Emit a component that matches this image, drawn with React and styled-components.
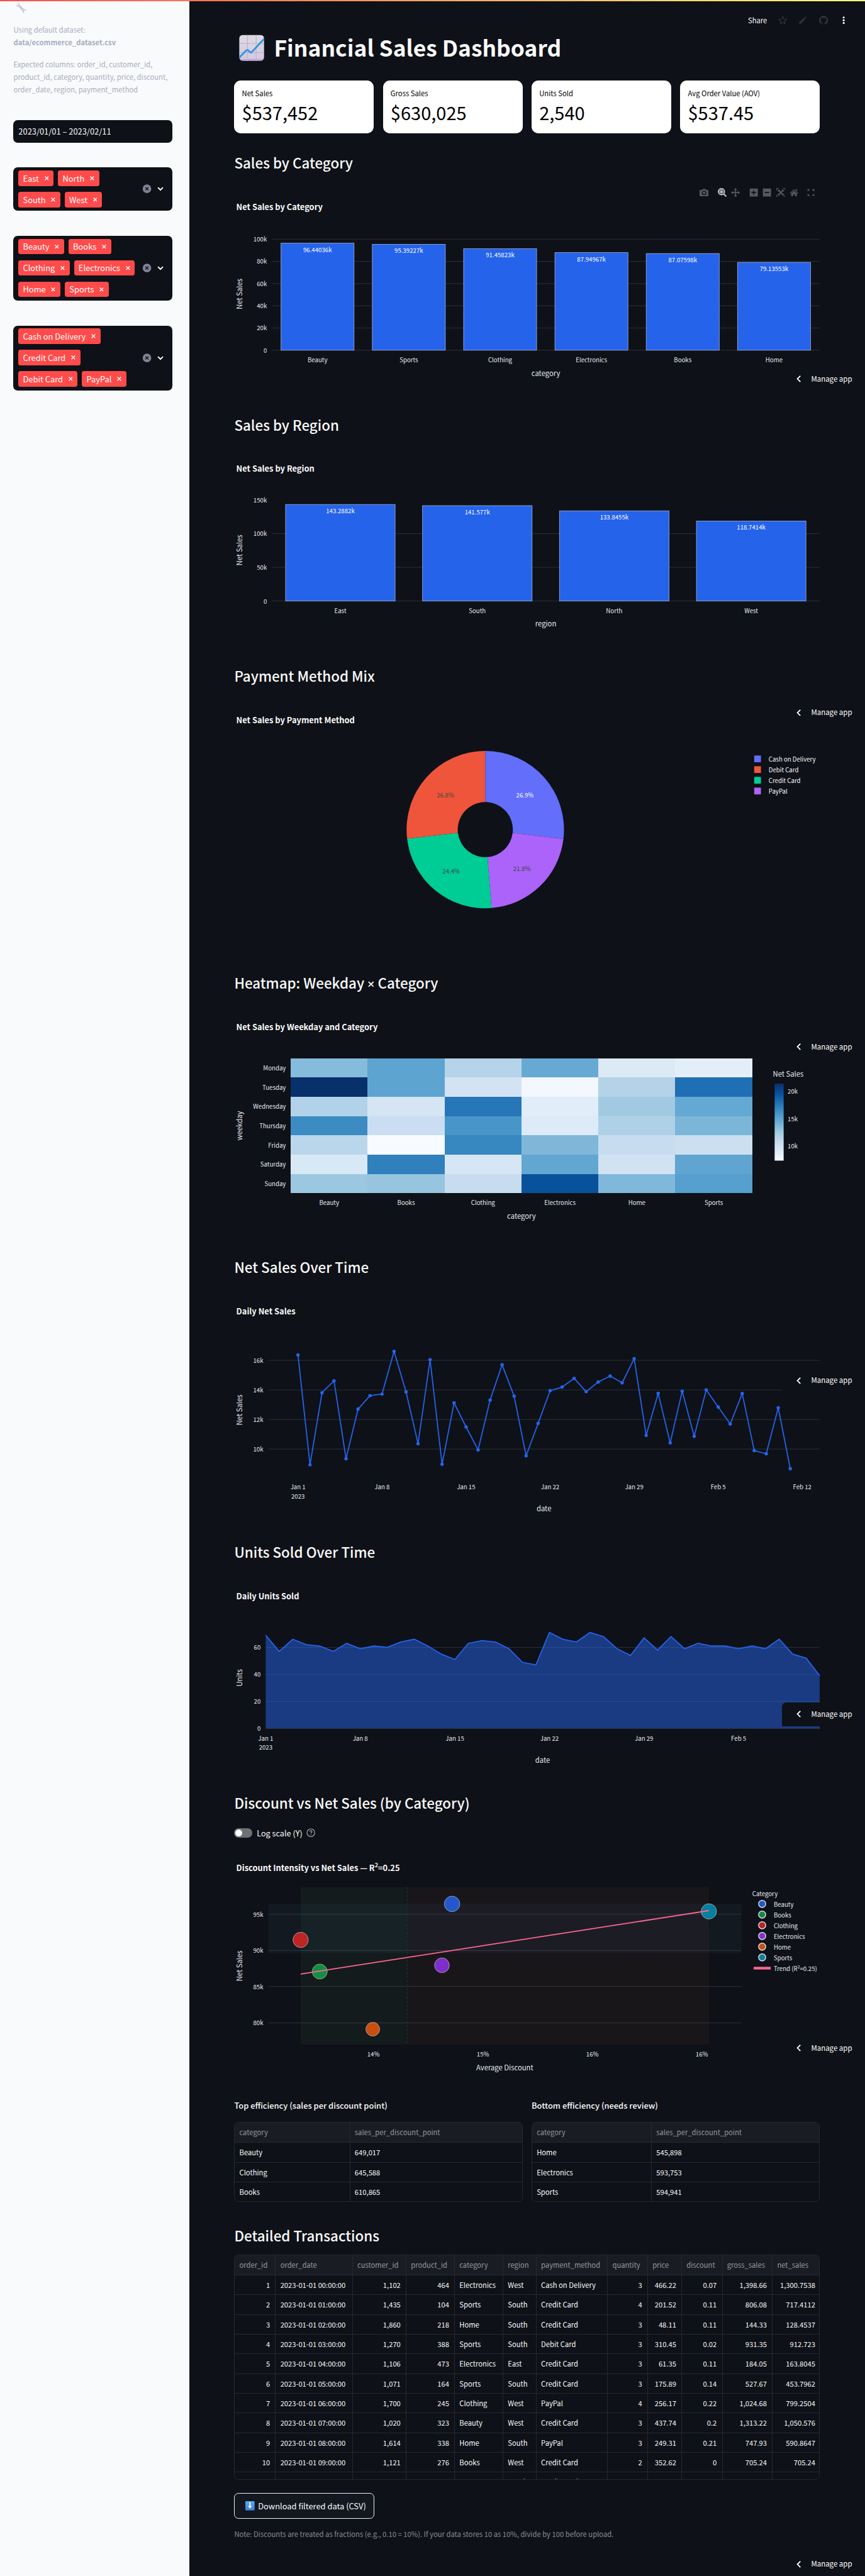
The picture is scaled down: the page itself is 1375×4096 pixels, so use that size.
import React from "react";
import styled, { createGlobalStyle, css } from "styled-components";

/* The root font size makes 1rem equal to 20 layout units. */
const u = (n) => `${n / 20}rem`;
/* Latin glyphs of the CJK family run about 11% large, so type is set a little smaller. */
const FONT_RATIO = 0.9;
const type = (n) => `${(n * FONT_RATIO) / 20}rem`;

const color = {
  bg: "#0e1117",
  side: "#f9fafc",
  text: "#fafafa",
  tick: "#e6eaf1",
  grid: "#31333f",
  line: "#26282d",
  blue: "#2563eb",
  tag: "#ff4b4b",
};

const GlobalStyle = createGlobalStyle`
  html { font-size: 14.3229px; }
  * { box-sizing: border-box; }
  body {
    margin: 0;
    background: ${color.bg};
    color: ${color.text};
    font-family: "Noto Sans CJK SC", "Noto Sans", sans-serif;
    overflow-x: hidden;
  }
`;

const Page = styled.div`
  position: relative;
  display: flex;
  width: ${u(1920)};
  height: ${u(5719)};
  overflow: hidden;
  background: ${color.bg};
`;

const TopStripe = styled.div`
  position: absolute;
  inset: 0 0 auto 0;
  height: ${u(3)};
  background: linear-gradient(90deg, #ff4b4b, #fffd80);
`;

/* ---------- Sidebar ---------- */

const Sidebar = styled.aside`
  flex: none;
  width: ${u(420)};
  padding: ${u(4)} ${u(38)} 0 ${u(30)};
  background: ${color.side};
`;

const WrenchIcon = styled.svg`
  display: block;
  width: ${u(26)};
  height: ${u(26)};
  margin: 0 0 ${u(22)} ${u(4)};
`;

const Hint = styled.p`
  margin: 0 0 ${u(20)};
  font-size: ${type(17.5)};
  line-height: ${u(28.1)};
  color: #a8adbc;
  white-space: nowrap;
`;

const inputBox = css`
  width: ${u(352)};
  background: ${color.bg};
  border-radius: ${u(10)};
`;

const DateInput = styled.div`
  ${inputBox}
  margin-top: ${u(54.5)};
  padding-left: ${u(11)};
  height: ${u(49.5)};
  line-height: ${u(50)};
  font-size: ${type(20)};
`;

const MultiSelect = styled.div`
  ${inputBox}
  display: flex;
  align-items: center;
  margin-top: ${u(55.2)};
  padding: ${u(6.8)} ${u(18)} ${u(7.9)} ${u(11)};
`;

const Tags = styled.div`
  display: flex;
  flex: none;
  flex-wrap: wrap;
  gap: ${u(13)} ${u(10)};
  width: ${u(266)};
`;

const Tag = styled.span`
  display: flex;
  align-items: center;
  height: ${u(34.5)};
  padding: 0 ${u(11)} 0 ${u(10)};
  gap: ${u(12)};
  background: ${color.tag};
  border-radius: ${u(5)};
  font-size: ${type(20)};
  line-height: ${u(33)};
  color: #fff;
`;

const TagCross = styled.svg`
  width: ${u(9.5)};
  height: ${u(9.5)};
`;

const SelectControls = styled.svg`
  width: ${u(50)};
  height: ${u(20)};
  margin-left: auto;
`;

const Cross = () => (
  <TagCross viewBox="0 0 10 10">
    <path d="M0.8 0.8 9.2 9.2M9.2 0.8 0.8 9.2" stroke="#fff" strokeWidth="2" />
  </TagCross>
);

const Select = ({ values }) => (
  <MultiSelect>
    <Tags>
      {values.map((v) => (
        <Tag key={v}>
          {v}
          <Cross />
        </Tag>
      ))}
    </Tags>
    <SelectControls viewBox="0 0 50 20">
      <circle cx="12" cy="10" r="9.5" fill="#808495" />
      <path d="M8.6 6.6 15.4 13.4M15.4 6.6 8.6 13.4" stroke={color.bg} strokeWidth="1.9" />
      <path d="M36.5 7.2 42 12.8 47.5 7.2" fill="none" stroke="#fff" strokeWidth="2.8" />
    </SelectControls>
  </MultiSelect>
);

/* ---------- Main column ---------- */

const Main = styled.main`
  display: flex;
  flex-direction: column;
  width: ${u(1400)};
  padding: ${u(70)} 0 0 ${u(100)};
`;

const HeaderBar = styled.div`
  position: absolute;
  top: ${u(30)};
  right: ${u(37.5)};
  display: flex;
  align-items: center;
  height: ${u(30)};
  font-size: ${type(17.5)};
`;

const HeaderIcon = styled.svg`
  width: ${u(20)};
  height: ${u(20)};
  margin-left: ${u(25)};
  flex: none;
`;

const Title = styled.h1`
  display: flex;
  align-items: center;
  gap: ${u(22)};
  height: ${u(70)};
  margin: 0 0 ${u(39)} ${u(10)};
  font-size: ${type(54.9)};
  line-height: ${u(69)};
  font-weight: 700;
  white-space: nowrap;
`;

const ChartEmoji = styled.svg`
  width: ${u(56)};
  height: ${u(60)};
`;

const Metrics = styled.div`
  display: grid;
  grid-template-columns: repeat(4, 1fr);
  gap: ${u(20)};
  width: ${u(1300)};
  margin-bottom: ${u(34)};
`;

const Metric = styled.div`
  height: ${u(117)};
  padding: ${u(15)} ${u(17)};
  background: #fff;
  border-radius: ${u(15)};
  color: #000;
`;

const MetricLabel = styled.div`
  font-size: ${type(17.5)};
  line-height: ${u(26)};
`;

const MetricValue = styled.div`
  font-size: ${type(45)};
  line-height: ${u(56)};
`;

const Heading = styled.h2`
  height: ${u(60)};
  margin: 0;
  padding-top: ${u(3)};
  font-size: ${type(34.7)};
  line-height: ${u(57)};
  font-weight: 500;
  white-space: nowrap;
`;

const Times = styled.span`
  font-family: "Noto Sans", sans-serif;
  font-size: 0.9em;
`;

const ChartBox = styled.div`
  position: relative;
  width: ${u(1300)};
  height: ${(p) => u(p.$h)};
`;

const ChartSvg = styled.svg`
  display: block;
  width: 100%;
  height: 100%;
  overflow: visible;
`;

const Label = styled.text`
  font-size: ${(p) => (p.$size || 15) * FONT_RATIO}px;
  font-weight: ${(p) => p.$weight || 400};
  text-anchor: ${(p) => p.$anchor || "middle"};
  fill: ${(p) => p.$fill || color.tick};
`;

const Chart = ({ height, children, overlay }) => (
  <ChartBox $h={height}>
    <ChartSvg viewBox={`0 0 1300 ${height}`}>{children}</ChartSvg>
    {overlay}
  </ChartBox>
);

const ChartTitle = ({ y = 77, children }) => (
  <Label x="5" y={y} $size={20} $weight={700} $anchor="start" $fill={color.text}>
    {children}
  </Label>
);

const YTitle = ({ y, children }) => (
  <Label transform={`translate(17.5 ${y}) rotate(-90)`} $size={17.5}>
    {children}
  </Label>
);

const XTitle = ({ x, y, children }) => (
  <Label x={x} y={y} $size={17.5}>
    {children}
  </Label>
);

const YGrid = ({ x1, x2 = 1300, ticks, labelX, width = 1.25 }) =>
  ticks.map(([y, text, hidden]) => (
    <g key={text}>
      {!hidden && <line x1={x1} x2={x2} y1={y} y2={y} stroke={color.grid} strokeWidth={width} />}
      <Label x={labelX} y={y + 5.4} $anchor="end">
        {text}
      </Label>
    </g>
  ));

/* ---------- Mode bar ---------- */

const ModeBar = styled.div`
  position: absolute;
  top: ${u(27)};
  left: ${u(1033)};
  display: flex;
  align-items: center;
  height: ${u(20)};
`;

const ModeIcon = styled.svg`
  width: ${u(20)};
  height: ${u(20)};
  margin-right: ${(p) => u(p.$gap)};
  flex: none;
  fill: ${(p) => (p.$active ? "#b9babc" : "#57595d")};
  stroke: none;
`;

const Tools = () => (
  <ModeBar>
    <ModeIcon viewBox="0 0 20 20" $gap={20}>
      <path
        fillRule="evenodd"
        d="M1.5 4.5H5L6.5 2h7L15 4.5h3.5A1.3 1.3 0 0 1 20 5.8v11a1.3 1.3 0 0 1-1.3 1.3H1.3A1.3 1.3 0 0 1 0 16.8V5.8A1.3 1.3 0 0 1 1.5 4.5ZM10 5.8a5 5 0 1 0 0 10 5 5 0 0 0 0-10Zm0 2a3 3 0 1 1 0 6 3 3 0 0 1 0-6Z"
      />
    </ModeIcon>
    <ModeIcon viewBox="0 0 20 20" $gap={10} $active>
      <path
        fillRule="evenodd"
        d="M8 0a8 8 0 0 1 6.7 12.4L20 17.8 17.8 20l-5.4-5.3A8 8 0 1 1 8 0ZM3.8 3.8v8.6h8.6V3.8ZM5 5h6.2v6.2H5Z"
      />
    </ModeIcon>
    <ModeIcon viewBox="0 0 20 20" $gap={20}>
      <path d="M10 0l3.8 4.4h-2.7v4.5h4.5V6.2L20 10l-4.4 3.8v-2.7h-4.5v4.5h2.7L10 20l-3.8-4.4h2.7v-4.5H4.4v2.7L0 10l4.4-3.8v2.7h4.5V4.4H6.2Z" />
    </ModeIcon>
    <ModeIcon viewBox="0 0 20 20" $gap={10}>
      <path fillRule="evenodd" d="M1 1h18v18H1ZM8.9 5v3.9H5v2.2h3.9V15h2.2v-3.9H15V8.9h-3.9V5Z" />
    </ModeIcon>
    <ModeIcon viewBox="0 0 20 20" $gap={10}>
      <path fillRule="evenodd" d="M1 1h18v18H1ZM5 8.9v2.2h10V8.9Z" />
    </ModeIcon>
    <ModeIcon viewBox="0 0 20 20" $gap={10}>
      <path d="M0 0h5.5v1.3H1.3v4.2H0ZM14.5 0H20v5.5h-1.3V1.3h-4.2ZM0 14.5h1.3v4.2h4.2V20H0ZM18.7 14.5H20V20h-5.5v-1.3h4.2Z" />
      <path d="M3.5 3.5h5L7 5l3 3 3-3-1.5-1.5h5v5L15 7l-3 3 3 3 1.5-1.5v5h-5L13 15l-3-3-3 3 1.5 1.5h-5v-5L5 13l3-3-3-3-1.5 1.5Z" />
    </ModeIcon>
    <ModeIcon viewBox="0 0 20 20" $gap={19}>
      <path d="M10 3.2 19.2 11l-1.2 1.2-8-6.7-8 6.7L.8 11ZM14.5 2.5h2.6v5l-2.6-2.2Z" />
      <path d="M10 6.9l6.5 5.5v5.3h-4.7v-4.2H8.2v4.2H3.5v-5.3Z" />
    </ModeIcon>
    <ModeIcon viewBox="0 0 20 20" $gap={0}>
      <path d="M1 2.5h4.5v2.3H3.3V7H1ZM11.5 2.5H16V7h-2.3V4.8h-2.2ZM1 13h2.3v2.2h2.2v2.3H1ZM13.7 13H16v4.5h-4.5v-2.3h2.2Z" />
    </ModeIcon>
  </ModeBar>
);

/* ---------- Bar charts ---------- */

const BarChart = ({ data, height, zero, perK, ticks, xName, yMid, titleY, overlay }) => {
  const x0 = 84;
  const step = 1216 / data.length;
  return (
    <Chart height={height} overlay={overlay}>
      <ChartTitle y={titleY}>{`Net Sales by ${xName === "region" ? "Region" : "Category"}`}</ChartTitle>
      <YGrid x1={x0} ticks={ticks} labelX={73} />
      {data.map(([name, value], i) => {
        const h = value * perK;
        const mid = x0 + step * (i + 0.5);
        return (
          <g key={name}>
            <rect
              x={mid - step * 0.4}
              y={zero - h}
              width={step * 0.8}
              height={h}
              fill={color.blue}
              stroke="rgba(229,236,246,0.6)"
              strokeWidth="1.25"
            />
            <Label x={mid} y={zero - h + 19.5} $fill="#fff">
              {`${value}k`}
            </Label>
            <Label x={mid} y={zero + 26.5}>
              {name}
            </Label>
          </g>
        );
      })}
      <XTitle x="692" y={zero + 57}>
        {xName}
      </XTitle>
      <YTitle y={yMid}>Net Sales</YTitle>
    </Chart>
  );
};

const byCategory = [
  ["Beauty", 96.44036],
  ["Sports", 95.39227],
  ["Clothing", 91.45823],
  ["Electronics", 87.94967],
  ["Books", 87.07598],
  ["Home", 79.13553],
];

const byRegion = [
  ["East", 143.2882],
  ["South", 141.577],
  ["North", 133.8455],
  ["West", 118.7414],
];

/* ---------- Donut ---------- */

const slices = [
  { name: "Cash on Delivery", pct: 26.9, share: 26.89, fill: "#636efa", ink: "#fff", tx: 645.7, ty: 235.4 },
  { name: "PayPal", pct: 21.8, share: 21.85, fill: "#ab63fa", ink: "#444", tx: 639, ty: 399.5 },
  { name: "Credit Card", pct: 24.4, share: 24.42, fill: "#00cc96", ink: "#444", tx: 482, ty: 405.4 },
  { name: "Debit Card", pct: 26.8, share: 26.84, fill: "#ef553b", ink: "#444", tx: 469.2, ty: 235.4 },
];
const legendOrder = ["Cash on Delivery", "Debit Card", "Credit Card", "PayPal"];

const Donut = () => {
  const cx = 557.7;
  const cy = 313;
  const R = 174.7;
  const r = 61.2;
  const at = (radius, turn) => {
    const a = turn * 2 * Math.PI;
    return `${cx + radius * Math.sin(a)} ${cy - radius * Math.cos(a)}`;
  };
  let start = 0;
  return (
    <Chart height={621}>
      <ChartTitle>Net Sales by Payment Method</ChartTitle>
      {slices.map((s) => {
        const a = start;
        const b = (start += s.share / 100);
        return (
          <g key={s.name}>
            <path
              d={`M${at(R, a)}A${R} ${R} 0 0 1 ${at(R, b)}L${at(r, b)}A${r} ${r} 0 0 0 ${at(r, a)}Z`}
              fill={s.fill}
            />
            <Label x={s.tx} y={s.ty + 5.5} $fill={s.ink}>{`${s.pct}%`}</Label>
          </g>
        );
      })}
      {legendOrder.map((name, i) => (
        <g key={name} transform={`translate(1154.6 ${156 + i * 23.75})`}>
          <rect y="-7.5" width="15" height="15" fill={slices.find((s) => s.name === name).fill} />
          <Label x="32" y="6" $anchor="start" $fill={color.text}>
            {name}
          </Label>
        </g>
      ))}
    </Chart>
  );
};

/* ---------- Heatmap ---------- */

const heatCols = ["Beauty", "Books", "Clothing", "Electronics", "Home", "Sports"];
const heatRows = [
  ["Monday", "#85bbdb #5ea4d1 #b6d4e9 #66aad4 #dceaf6 #e4eef8"],
  ["Tuesday", "#08306b #5ea4d1 #d3e3f3 #f3f7fe #b4d3e9 #206fb4"],
  ["Wednesday", "#b1d2e8 #d5e5f4 #2676b8 #e1edf8 #a1cae2 #64a9d3"],
  ["Thursday", "#3c8cc3 #caddf2 #4896c8 #ddeaf7 #afd1e7 #7bb6d9"],
  ["Friday", "#bad6eb #f7fbff #3787c0 #80b7d9 #c8dcf0 #cbdff0"],
  ["Saturday", "#d9e8f5 #3080bd #d7e6f4 #62a7d2 #d1e2f2 #60a5d0"],
  ["Sunday", "#9bc8e0 #97c5df #c8dcef #08529c #7fb8da #569fcf"],
];
const blues = ["#f7fbff", "#deebf7", "#c6dbef", "#9ecae1", "#6baed6", "#4292c6", "#2171b5", "#08519c", "#08306b"];

const Heatmap = () => {
  const x0 = 125.8;
  const y0 = 139;
  const w = 170.75;
  const h = 42.86;
  return (
    <Chart height={572}>
      <defs>
        <linearGradient id="blues" x1="0" y1="1" x2="0" y2="0">
          {blues.map((c, i) => (
            <stop key={c} offset={i / 8} stopColor={c} />
          ))}
        </linearGradient>
      </defs>
      <ChartTitle>Net Sales by Weekday and Category</ChartTitle>
      {heatRows.map(([day, cells], r) => (
        <g key={day}>
          <Label x="115" y={y0 + h * (r + 0.5) + 5.5} $anchor="end">
            {day}
          </Label>
          {cells.split(" ").map((fill, c) => (
            <rect
              key={c}
              x={x0 + c * w}
              y={y0 + r * h}
              width={w}
              height={h}
              fill={fill}
              shapeRendering="crispEdges"
            />
          ))}
        </g>
      ))}
      {heatCols.map((name, c) => (
        <Label key={name} x={x0 + w * (c + 0.5)} y="465.5">
          {name}
        </Label>
      ))}
      <XTitle x="638" y="495.5">
        category
      </XTitle>
      <YTitle y="289">weekday</YTitle>
      <Label x="1196" y="179.5" $size={17.5} $anchor="start">
        Net Sales
      </Label>
      <rect x="1200" y="195.5" width="20" height="171" fill="url(#blues)" />
      {[
        ["20k", 212.4],
        ["15k", 273.3],
        ["10k", 334.2],
      ].map(([t, y]) => (
        <Label key={t} x="1229" y={y + 5.4} $anchor="start">
          {t}
        </Label>
      ))}
    </Chart>
  );
};

/* ---------- Time series ---------- */

const dailySales = [
  16.36, 8.93, 13.81, 14.61, 9.34, 12.7, 13.61, 13.72, 16.61, 13.86, 10.36, 16.05, 8.97, 13.12, 11.49, 9.94, 13.31,
  15.7, 13.58, 9.54, 11.73, 13.95, 14.19, 14.78, 13.88, 14.53, 14.94, 14.48, 16.11, 10.92, 13.77, 10.41, 13.91, 10.86,
  14.0, 12.84, 11.69, 13.76, 9.89, 9.68, 12.79, 8.67,
];
const dailyUnits = [
  69, 57, 66, 62, 61, 57, 63, 59, 61, 60, 64, 66, 61, 55, 51, 63, 65, 64, 59, 49, 47, 71, 66, 64, 71, 68, 59, 54, 67,
  58, 68, 59, 63, 61, 61, 59, 61, 59, 66, 55, 52, 39,
];
const weeks = ["Jan 1", "Jan 8", "Jan 15", "Jan 22", "Jan 29", "Feb 5", "Feb 12"];

const DateTicks = ({ x0, step, y, count }) => (
  <>
    {weeks.slice(0, count).map((t, i) => (
      <Label key={t} x={x0 + i * 7 * step} y={y}>
        {t}
      </Label>
    ))}
    <Label x={x0} y={y + 20}>
      2023
    </Label>
  </>
);

const SalesLine = () => {
  const pts = dailySales.map((v, i) => [142 + i * 26.65, 178.8 + (16 - v) * 32.8]);
  return (
    <Chart height={572}>
      <ChartTitle>Daily Net Sales</ChartTitle>
      <YGrid
        x1={76}
        labelX={65}
        ticks={[
          [178.8, "16k"],
          [244.5, "14k"],
          [310.2, "12k"],
          [375.7, "10k"],
        ]}
      />
      <polyline points={pts.join(" ")} fill="none" stroke={color.blue} strokeWidth="2.5" strokeLinejoin="round" />
      {pts.map(([x, y]) => (
        <circle key={x} cx={x} cy={y} r="3.8" fill={color.blue} />
      ))}
      <DateTicks x0={142} step={26.65} y={465.5} count={7} />
      <XTitle x="688" y="514.5">
        date
      </XTitle>
      <YTitle y="289">Net Sales</YTitle>
    </Chart>
  );
};

const UnitsArea = () => {
  const zero = 363.5;
  const line = dailyUnits.map((v, i) => [70.3 + i * 29.993, zero - v * 3]).join(" ");
  return (
    <Chart height={497}>
      <ChartTitle>Daily Units Sold</ChartTitle>
      <YGrid
        x1={70.3}
        labelX={59}
        ticks={[
          [zero - 180, "60"],
          [zero - 120, "40"],
          [zero - 60, "20"],
          [zero, "0"],
        ]}
      />
      <polygon points={`70.3 ${zero} ${line} 1300 ${zero}`} fill="rgba(37,99,235,0.5)" />
      <polyline points={line} fill="none" stroke={color.blue} strokeWidth="2.5" />
      <DateTicks x0={70.3} step={29.993} y={390.5} count={6} />
      <XTitle x="685" y="439.5">
        date
      </XTitle>
      <YTitle y="251">Units</YTitle>
    </Chart>
  );
};

/* ---------- Scatter ---------- */

const bubbles = [
  { name: "Beauty", x: 484, y: 137.3, r: 17.2, fill: "#2563eb", legend: "#2255cf" },
  { name: "Books", x: 190.3, y: 287.5, r: 16.7, fill: "#16a34a", legend: "#158a42" },
  { name: "Clothing", x: 147.8, y: 217.2, r: 17, fill: "#dc2626", legend: "#bd2224" },
  { name: "Electronics", x: 461.5, y: 273.6, r: 16.4, fill: "#9333ea", legend: "#8230d0" },
  { name: "Home", x: 308, y: 415.5, r: 15.3, fill: "#ea580c", legend: "#c94f10" },
  { name: "Sports", x: 1054, y: 153.9, r: 17, fill: "#0891b2", legend: "#0b80a0" },
];

const Squared = ({ before, after, rise = 6 }) => (
  <>
    {before}
    <tspan dy={-rise} fontSize="70%">
      2
    </tspan>
    <tspan dy={rise}>{after}</tspan>
  </>
);

const Scatter = () => (
  <Chart height={570}>
    <ChartTitle y={63.8}>
      <Squared before="Discount Intensity vs Net Sales — R" after="=0.25" rise={7.5} />
    </ChartTitle>
    <YGrid
      x1={76}
      x2={1126.4}
      labelX={65}
      ticks={[
        [160.4, "95k"],
        [240.8, "90k"],
        [320.8, "85k"],
        [401.6, "80k"],
      ]}
    />
    <rect x="147.8" y="99.8" width="237.2" height="350" fill="rgba(120,200,130,0.055)" />
    <rect x="385" y="99.8" width="669.6" height="350" fill="rgba(220,115,100,0.055)" />
    <rect x="76" y="137" width="1050.4" height="108.6" fill="rgba(99,160,220,0.055)" />
    <line x1="385" x2="385" y1="99.8" y2="449.8" stroke="#23302f" strokeWidth="1.6" strokeDasharray="5 4" />
    <line x1="76" x2="1126" y1="245.8" y2="245.8" stroke="#1c2740" strokeWidth="1.6" strokeDasharray="2 3" />
    {bubbles.map((b) => (
      <circle
        key={b.name}
        cx={b.x}
        cy={b.y}
        r={b.r}
        fill={b.fill}
        stroke="#d9dce2"
        strokeWidth="1"
        opacity="0.85"
      />
    ))}
    <line x1="147.8" y1="293" x2="1054" y2="152.2" stroke="#ff6692" strokeWidth="2.6" />
    {["14%", "15%", "16%", "16%"].map((t, i) => (
      <Label key={i} x={309.4 + i * 243} y="476.5">
        {t}
      </Label>
    ))}
    <XTitle x="601" y="507">
      Average Discount
    </XTitle>
    <YTitle y="275">Net Sales</YTitle>
    <Label x="1150.3" y="120.5" $anchor="start">
      Category
    </Label>
    {bubbles.map((b, i) => (
      <g key={b.name} transform={`translate(1172.3 ${137.3 + i * 23.75})`}>
        <circle r="7.9" fill={b.legend} stroke="#dcdee3" strokeWidth="2" />
        <Label x="25.7" y="6.2" $anchor="start">
          {b.name}
        </Label>
      </g>
    ))}
    <line x1="1153.6" x2="1191.4" y1="280" y2="280" stroke="#ff6692" strokeWidth="6" />
    <Label x="1198" y="286" $anchor="start">
      <Squared before="Trend (R" after="=0.25)" />
    </Label>
  </Chart>
);

const ToggleRow = styled.label`
  display: flex;
  align-items: center;
  height: ${u(30)};
  margin: ${u(24)} 0 ${u(5)};
  font-size: ${type(19.7)};
  line-height: ${u(30)};
`;

const Switch = styled.span`
  display: flex;
  align-items: center;
  width: ${u(40)};
  height: ${u(20)};
  margin-right: ${u(10)};
  padding: ${u(2.5)};
  border-radius: ${u(10)};
  background: #6e7074;

  &::before {
    content: "";
    width: ${u(15)};
    height: ${u(15)};
    border-radius: 50%;
    background: #fff;
  }
`;

const HelpIcon = styled.svg`
  width: ${u(20)};
  height: ${u(20)};
  margin-left: ${u(9)};
`;

/* ---------- Tables ---------- */

const Pair = styled.div`
  display: grid;
  grid-template-columns: 1fr 1fr;
  gap: ${u(20)};
  width: ${u(1300)};
  margin-bottom: ${u(42.5)};
`;

const PairTitle = styled.div`
  height: ${u(52)};
  font-size: ${type(20)};
  font-weight: 500;
  line-height: ${u(30)};
`;

const Frame = styled.div`
  height: ${(p) => u(p.$h)};
  width: ${(p) => (p.$w ? u(p.$w) : "100%")};
  border: 1px solid ${color.line};
  border-radius: ${u(10)};
  overflow: hidden;
`;

const Row = styled.div`
  display: grid;
  grid-template-columns: ${(p) => p.$cols};
  height: ${(p) => u(p.$head ? 45 : 43.75)};
  background: ${(p) => (p.$head ? "#1a1c24" : "transparent")};
  color: ${(p) => (p.$head ? "#96979b" : color.text)};
`;

const Cell = styled.div`
  padding: 0 ${u(11.5)} 0 ${u(10)};
  border-right: 1px solid ${color.line};
  border-bottom: 1px solid ${color.line};
  font-size: ${type(17.4)};
  line-height: ${u(42)};
  text-align: ${(p) => (p.$right ? "right" : "left")};
  white-space: nowrap;

  &:last-child {
    border-right: 0;
    padding-right: ${u(9)};
  }
`;

const Table = ({ widths, head, rows, numeric = [], height, width }) => {
  const cols = widths.map((w) => (w === "rest" ? "1fr" : u(w))).join(" ");
  return (
    <Frame $h={height} $w={width}>
      <Row $head $cols={cols}>
        {head.map((h) => (
          <Cell key={h}>{h}</Cell>
        ))}
      </Row>
      {rows.map((r, i) => (
        <Row key={i} $cols={cols}>
          {r.map((c, j) => (
            <Cell key={j} $right={numeric.includes(j)}>
              {c}
            </Cell>
          ))}
        </Row>
      ))}
    </Frame>
  );
};

const txHead = [
  "order_id",
  "order_date",
  "customer_id",
  "product_id",
  "category",
  "region",
  "payment_method",
  "quantity",
  "price",
  "discount",
  "gross_sales",
  "net_sales",
];
const txRows = [
  "1|2023-01-01 00:00:00|1,102|464|Electronics|West|Cash on Delivery|3|466.22|0.07|1,398.66|1,300.7538",
  "2|2023-01-01 01:00:00|1,435|104|Sports|South|Credit Card|4|201.52|0.11|806.08|717.4112",
  "3|2023-01-01 02:00:00|1,860|218|Home|South|Credit Card|3|48.11|0.11|144.33|128.4537",
  "4|2023-01-01 03:00:00|1,270|388|Sports|South|Debit Card|3|310.45|0.02|931.35|912.723",
  "5|2023-01-01 04:00:00|1,106|473|Electronics|East|Credit Card|3|61.35|0.11|184.05|163.8045",
  "6|2023-01-01 05:00:00|1,071|164|Sports|South|Credit Card|3|175.89|0.14|527.67|453.7962",
  "7|2023-01-01 06:00:00|1,700|245|Clothing|West|PayPal|4|256.17|0.22|1,024.68|799.2504",
  "8|2023-01-01 07:00:00|1,020|323|Beauty|West|Credit Card|3|437.74|0.2|1,313.22|1,050.576",
  "9|2023-01-01 08:00:00|1,614|338|Home|South|PayPal|3|249.31|0.21|747.93|590.8647",
  "10|2023-01-01 09:00:00|1,121|276|Books|West|Credit Card|2|352.62|0|705.24|705.24",
  "|||||South|Credit Card|||||",
].map((r) => r.split("|"));

const TableSlot = styled.div`
  margin: ${u(14)} 0 ${u(29.3)};
`;

const DownloadButton = styled.button`
  display: flex;
  align-items: center;
  gap: ${u(7.5)};
  width: ${u(311.5)};
  height: ${u(58)};
  padding: 0 ${u(23.5)};
  border: 1px solid #f0f0f1;
  border-radius: ${u(10)};
  background: #131720;
  color: ${color.text};
  font: inherit;
  font-size: ${type(20)};
  line-height: ${u(30)};
  white-space: nowrap;
`;

const ArrowEmoji = styled.svg`
  width: ${u(20.5)};
  height: ${u(20.5)};
  flex: none;
`;

const Note = styled.p`
  margin: ${u(21)} 0 0;
  font-size: ${type(17.5)};
  line-height: ${u(26)};
  color: #8b8c90;
  white-space: nowrap;
`;

/* ---------- Manage app badge ---------- */

const Badge = styled.div`
  position: absolute;
  right: 0;
  top: ${(p) => u(p.$top)};
  display: flex;
  align-items: center;
  width: ${u(184)};
  height: ${u(52.5)};
  padding-left: ${u(32)};
  border-top-left-radius: ${u(10)};
  background: ${color.bg};
  font-size: ${type(17.8)};
  line-height: ${u(50)};
  color: #fff;
  white-space: nowrap;
`;

const Chevron = styled.svg`
  width: ${u(10)};
  height: ${u(15)};
  margin-right: ${u(22.5)};
`;

const ManageApp = ({ top }) => (
  <Badge $top={top}>
    <Chevron viewBox="0 0 10 15">
      <path d="M8.8 1 2.2 7.5 8.8 14" fill="none" stroke="#fff" strokeWidth="2.5" />
    </Chevron>
    Manage app
  </Badge>
);

export default function App() {
  return (
    <Page>
      <GlobalStyle />
      <Sidebar>
        <WrenchIcon viewBox="0 0 26 26">
          <defs>
            <linearGradient id="steel" x1="0" y1="0" x2="1" y2="1">
              <stop offset="0" stopColor="#d9d6de" />
              <stop offset="0.5" stopColor="#cfc3e2" />
              <stop offset="1" stopColor="#d5d2da" />
            </linearGradient>
          </defs>
          <path
            d="M5.5 1.8 7.6 4.2 6.9 6.9 4.3 7.5 2.3 5.3C1.7 8.5 4 11 7 10.6L16.3 19.8C15.6 23 18.3 25.6 21.4 24.7L19.3 22.3 20.1 19.7 22.7 19 24.8 21.2C25.5 18 23 15.6 20 16.2L10.5 6.9C11.1 3.9 8.6 1 5.5 1.8Z"
            fill="url(#steel)"
          />
        </WrenchIcon>
        <Hint>
          Using default dataset:
          <br />
          <b>data/ecommerce_dataset.csv</b>
        </Hint>
        <Hint>
          Expected columns: order_id, customer_id,
          <br />
          product_id, category, quantity, price, discount,
          <br />
          order_date, region, payment_method
        </Hint>
        <DateInput>2023/01/01 – 2023/02/11</DateInput>
        <Select values={["East", "North", "South", "West"]} />
        <Select values={["Beauty", "Books", "Clothing", "Electronics", "Home", "Sports"]} />
        <Select values={["Cash on Delivery", "Credit Card", "Debit Card", "PayPal"]} />
      </Sidebar>

      <Main>
        <Title>
          <ChartEmoji viewBox="0 0 56 60">
            <defs>
              <linearGradient id="paper" x1="0" y1="0" x2="0" y2="1">
                <stop offset="0" stopColor="#dddbe2" />
                <stop offset="0.9" stopColor="#d6c8e4" />
                <stop offset="1" stopColor="#a78cc4" />
              </linearGradient>
              <clipPath id="sheet">
                <rect x="0.5" y="2" width="55" height="58" rx="8" />
              </clipPath>
            </defs>
            <g clipPath="url(#sheet)">
              <rect y="2" width="56" height="58" fill="url(#paper)" />
              <path d="M18.5 2v58M38 2v58M0 21h56M0 41.5h56" stroke="#bdb7c6" strokeWidth="1.8" />
              <path
                d="M-1 54 15.5 37q3-3 5.5 0l3 3q2.5 2.5 5-.5L57 9.500"
                fill="none"
                stroke="#3596e0"
                strokeWidth="4"
              />
            </g>
          </ChartEmoji>
          Financial Sales Dashboard
        </Title>

        <Metrics>
          {[
            ["Net Sales", "$537,452"],
            ["Gross Sales", "$630,025"],
            ["Units Sold", "2,540"],
            ["Avg Order Value (AOV)", "$537.45"],
          ].map(([label, value]) => (
            <Metric key={label}>
              <MetricLabel>{label}</MetricLabel>
              <MetricValue>{value}</MetricValue>
            </Metric>
          ))}
        </Metrics>

        <Heading>Sales by Category</Heading>
        <BarChart
          data={byCategory}
          height={521}
          zero={388}
          perK={2.465}
          titleY={76.3}
          yMid={263}
          xName="category"
          ticks={[
            [141.5, "100k"],
            [190.8, "80k"],
            [240.1, "60k"],
            [289.4, "40k"],
            [338.7, "20k"],
            [388, "0"],
          ]}
          overlay={<Tools />}
        />

        <Heading>Sales by Region</Heading>
        <BarChart
          data={byRegion}
          height={498}
          zero={364}
          perK={1.496}
          titleY={77.5}
          yMid={251}
          xName="region"
          ticks={[
            [139.8, "150k", true],
            [214.4, "100k"],
            [289.2, "50k"],
            [364, "0"],
          ]}
        />

        <Heading>Payment Method Mix</Heading>
        <Donut />

        <Heading>
          Heatmap: Weekday <Times>×</Times> Category
        </Heading>
        <Heatmap />

        <Heading>Net Sales Over Time</Heading>
        <SalesLine />

        <Heading>Units Sold Over Time</Heading>
        <UnitsArea />

        <Heading>Discount vs Net Sales (by Category)</Heading>
        <ToggleRow>
          <Switch />
          Log scale (Y)
          <HelpIcon viewBox="0 0 20 20" fill="none" stroke="#a3a4a8" strokeWidth="1.7">
            <circle cx="10" cy="10" r="8.6" />
            <path d="M7.6 7.8a2.4 2.4 0 1 1 3.6 2.1c-.8.5-1.2.9-1.2 1.7M10 13.3v1.7" />
          </HelpIcon>
        </ToggleRow>
        <Scatter />

        <Pair>
          <div>
            <PairTitle>Top efficiency (sales per discount point)</PairTitle>
            <Table
              height={177.5}
              widths={[256, "rest"]}
              head={["category", "sales_per_discount_point"]}
              rows={[
                ["Beauty", "649,017"],
                ["Clothing", "645,588"],
                ["Books", "610,865"],
              ]}
            />
          </div>
          <div>
            <PairTitle>Bottom efficiency (needs review)</PairTitle>
            <Table
              height={177.5}
              widths={[265.5, "rest"]}
              head={["category", "sales_per_discount_point"]}
              rows={[
                ["Home", "545,898"],
                ["Electronics", "593,753"],
                ["Sports", "594,941"],
              ]}
            />
          </div>
        </Pair>

        <Heading>Detailed Transactions</Heading>
        <TableSlot>
          <Table
            height={500}
            width={1300}
            widths={[90.9, 170.8, 119.1, 107.6, 107.6, 73.7, 158.3, 89, 75.6, 89.9, 111.4, "rest"]}
            numeric={[0, 2, 3, 7, 8, 9, 10, 11]}
            head={txHead}
            rows={txRows}
          />
        </TableSlot>
        <DownloadButton>
          <ArrowEmoji viewBox="0 0 20 20">
            <defs>
              <linearGradient id="key" x1="0" y1="0" x2="0" y2="1">
                <stop offset="0" stopColor="#55a8f0" />
                <stop offset="1" stopColor="#3f7fdc" />
              </linearGradient>
            </defs>
            <rect width="20" height="20" rx="2" fill="url(#key)" />
            <path d="M10 3.5v9" stroke="#fff" strokeWidth="2.6" strokeLinecap="round" />
            <path d="M5.5 10.3h9L10 16Z" fill="#fff" />
          </ArrowEmoji>
          Download filtered data (CSV)
        </DownloadButton>
        <Note>
          Note: Discounts are treated as fractions (e.g., 0.10 = 10%). If your data stores 10 as 10%, divide by 100
          before upload.
        </Note>
      </Main>

      <HeaderBar>
        Share
        <HeaderIcon viewBox="0 0 20 20" fill="none" stroke="#30333d" strokeWidth="1.7">
          <path d="M10 1.8 12.3 7.4 18.4 7.9 13.8 11.9 15.2 17.9 10 14.7 4.8 17.9 6.2 11.9 1.6 7.9 7.7 7.4Z" />
        </HeaderIcon>
        <HeaderIcon viewBox="0 0 20 20" fill="#30333d">
          <path d="M2 14.8V18h3.2l9.3-9.3-3.2-3.2ZM17.6 5.6a.9.9 0 0 0 0-1.2l-2-2a.9.9 0 0 0-1.2 0l-1.8 1.8 3.2 3.2Z" />
        </HeaderIcon>
        <HeaderIcon viewBox="0 0 16 16" fill="#30333d">
          <path d="M8 0C3.58 0 0 3.58 0 8c0 3.54 2.29 6.53 5.47 7.59.4.07.55-.17.55-.38 0-.19-.01-.82-.01-1.49-2.01.37-2.53-.49-2.69-.94-.09-.23-.48-.94-.82-1.13-.28-.15-.68-.52-.01-.53.63-.01 1.08.58 1.23.82.72 1.21 1.87.87 2.33.66.07-.52.28-.87.51-1.07-1.78-.2-3.64-.89-3.64-3.95 0-.87.31-1.59.82-2.15-.08-.2-.36-1.02.08-2.12 0 0 .67-.21 2.2.82.64-.18 1.32-.27 2-.27s1.36.09 2 .27c1.53-1.04 2.2-.82 2.2-.82.44 1.1.16 1.92.08 2.12.51.56.82 1.27.82 2.15 0 3.07-1.87 3.75-3.65 3.95.29.25.54.73.54 1.48 0 1.07-.01 1.93-.01 2.2 0 .21.15.46.55.38A8.01 8.01 0 0 0 16 8c0-4.42-3.58-8-8-8Z" />
        </HeaderIcon>
        <HeaderIcon viewBox="0 0 20 20" fill="#fff">
          <circle cx="10" cy="3.8" r="2.2" />
          <circle cx="10" cy="10" r="2.2" />
          <circle cx="10" cy="16.2" r="2.2" />
        </HeaderIcon>
      </HeaderBar>

      {[815, 1556, 2298, 3039, 3780, 4521, 5667].map((top) => (
        <ManageApp key={top} top={top} />
      ))}
      <TopStripe />
    </Page>
  );
}
